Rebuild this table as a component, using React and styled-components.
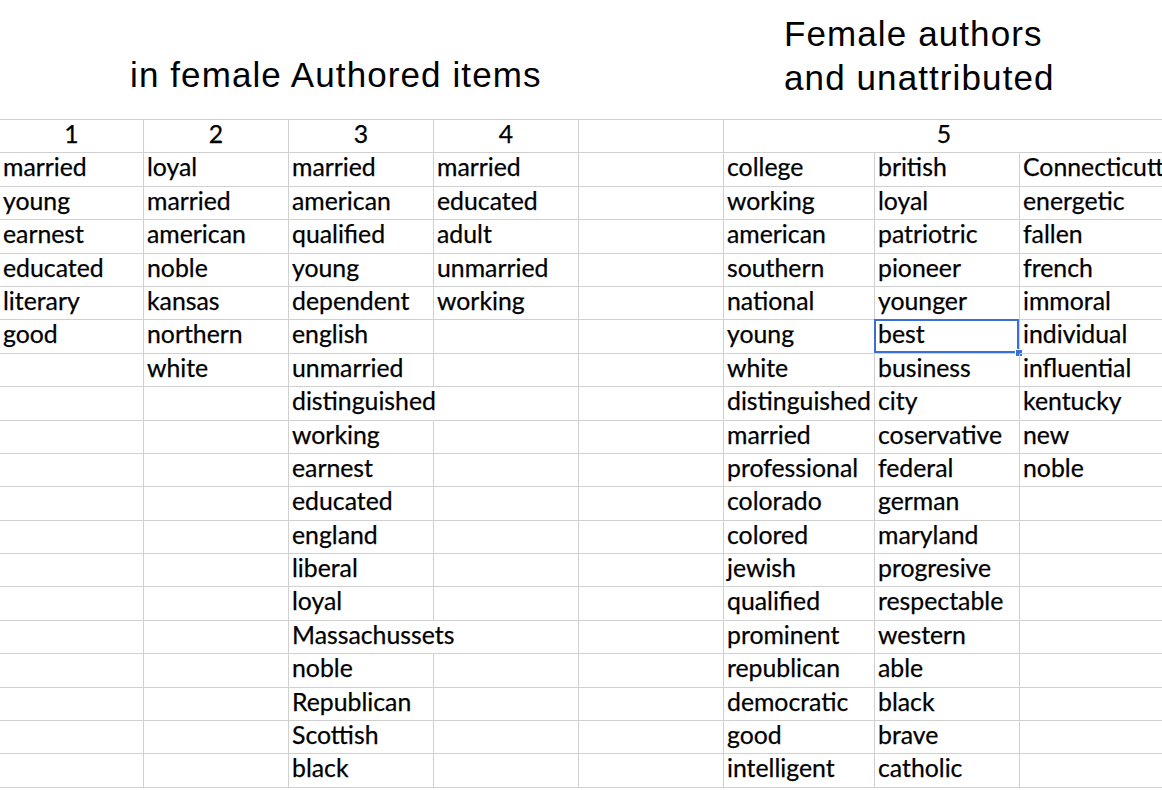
import React from 'react';
import styled, { createGlobalStyle } from 'styled-components';

const GlobalStyle = createGlobalStyle`
  html, body {
    margin: 0;
    padding: 0;
    background: #ffffff;
    overflow: hidden;
  }
`;

const Page = styled.div`
  width: 1162px;
  height: 790px;
  overflow: hidden;
  background: #fff;
`;

const TitleBand = styled.div`
  display: grid;
  grid-template-columns: 723px 1fr;
  height: 119px;
  font-family: "Liberation Sans", Arial, sans-serif;
  font-size: 35px;
  letter-spacing: 1.1px;
  line-height: 44px;
  color: #000;
`;

const Title = styled.div`
  padding-left: ${p => p.$left}px;
  padding-top: ${p => p.$top}px;
  white-space: nowrap;
`;

const Sheet = styled.div`
  display: grid;
  grid-template-columns: 144px 145px 145px 145px 145px 151px 145px 145px;
  grid-auto-rows: 33.4px;
  width: 1165px;
  border-top: 1px solid #d0d0d0;
  font-family: Lato, "Open Sans", sans-serif;
  font-size: 24.8px;
  line-height: 27.5px;
  color: #000;
  -webkit-text-stroke: 0.25px #000;
`;

const Cell = styled.div`
  position: relative;
  box-sizing: border-box;
  padding: 0 3px;
  border-right: 1px solid ${p => (p.$spill ? 'transparent' : '#d0d0d0')};
  border-bottom: 1px solid #d0d0d0;
  white-space: nowrap;
  overflow: visible;
  z-index: ${p => (p.$spill ? 1 : 0)};

  ${p => p.$selected && `
    &::after {
      content: '';
      position: absolute;
      top: -1px;
      left: -1px;
      right: 0;
      bottom: 0;
      border: 2px solid #3a6fd6;
    }
    &::before {
      content: '';
      position: absolute;
      right: -4px;
      bottom: -4px;
      width: 6px;
      height: 6px;
      background: #3a6fd6;
      border: 1px solid #fff;
      z-index: 2;
    }
  `}
`;

const HeadCell = styled(Cell)`
  text-align: center;
  grid-column: span ${p => p.$span || 1};
`;

const columns = [
  ['married', 'young', 'earnest', 'educated', 'literary', 'good'],
  ['loyal', 'married', 'american', 'noble', 'kansas', 'northern', 'white'],
  ['married', 'american', 'qualified', 'young', 'dependent', 'english', 'unmarried',
    'distinguished', 'working', 'earnest', 'educated', 'england', 'liberal', 'loyal',
    'Massachussets', 'noble', 'Republican', 'Scottish', 'black'],
  ['married', 'educated', 'adult', 'unmarried', 'working'],
  [],
  ['college', 'working', 'american', 'southern', 'national', 'young', 'white',
    'distinguished', 'married', 'professional', 'colorado', 'colored', 'jewish',
    'qualified', 'prominent', 'republican', 'democratic', 'good', 'intelligent'],
  ['british', 'loyal', 'patriotric', 'pioneer', 'younger', 'best', 'business', 'city',
    'coservative', 'federal', 'german', 'maryland', 'progresive', 'respectable',
    'western', 'able', 'black', 'brave', 'catholic'],
  ['Connecticutt', 'energetic', 'fallen', 'french', 'immoral', 'individual',
    'influential', 'kentucky', 'new', 'noble'],
];

// text that runs past its cell into an empty neighbour
const spills = new Set(['2-7', '2-14']);
const selected = '6-5';
const ROWS = 19;

const App = () => {
  const rows = [];
  for (let r = 0; r < ROWS; r++) {
    for (let c = 0; c < columns.length; c++) {
      const key = `${c}-${r}`;
      rows.push(
        <Cell key={key} $spill={spills.has(key)} $selected={key === selected}>
          {columns[c][r] || ''}
        </Cell>
      );
    }
  }

  return (
    <Page>
      <GlobalStyle />
      <TitleBand>
        <Title $left={130} $top={53}>in female Authored items</Title>
        <Title $left={61} $top={12}>
          Female authors
          <br />
          and unattributed
        </Title>
      </TitleBand>
      <Sheet>
        <HeadCell>1</HeadCell>
        <HeadCell>2</HeadCell>
        <HeadCell>3</HeadCell>
        <HeadCell>4</HeadCell>
        <HeadCell />
        <HeadCell $span={3}>5</HeadCell>
        {rows}
      </Sheet>
    </Page>
  );
};

export default App;
